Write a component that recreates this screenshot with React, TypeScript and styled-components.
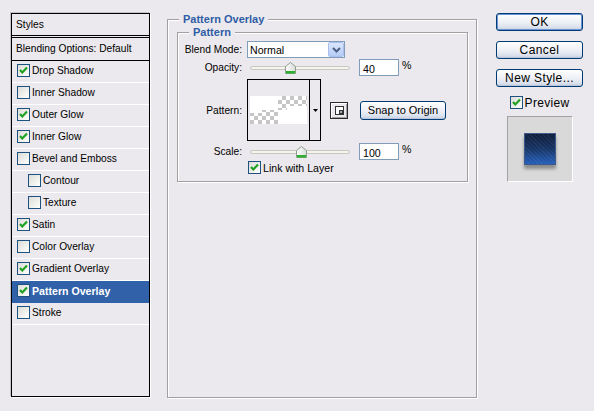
import styled, { createGlobalStyle } from "styled-components";

const GlobalStyle = createGlobalStyle`
  html, body {
    margin: 0;
    padding: 0;
    background: #ebe9ed;
  }
  body {
    font-family: "Liberation Sans", Arial, sans-serif;
    font-size: 10.2px;
    color: #000;
  }
`;

const Window = styled.div`
  width: 594px;
  height: 411px;
  box-sizing: border-box;
  display: flex;
  align-items: flex-start;
  padding: 13px 0 0 11px;
`;

/* ---------- left styles list ---------- */
const StylesPanel = styled.div`
  width: 139px;
  height: 384px;
  box-sizing: border-box;
  border: 1px solid #000;
  box-shadow: -1px -1px 0 #c4c2c8, 1px 1px 0 #fff;
  display: flex;
  flex-direction: column;
`;

const PanelHeader = styled.div`
  height: 21px;
  line-height: 21px;
  padding-left: 4px;
  border-bottom: 3px double #000;
`;

const BlendingRow = styled.div`
  height: 22px;
  line-height: 22px;
  padding-left: 4px;
  border-bottom: 1px solid #000;
`;

const StyleRow = styled.div<{ $indent?: boolean; $selected?: boolean }>`
  height: 21px;
  box-sizing: border-box;
  padding-bottom: 2px;
  display: flex;
  align-items: center;
  gap: 2px;
  padding-left: ${({ $indent }) => ($indent ? "16px" : "5px")};
  border-bottom: 1px solid ${({ $selected }) => ($selected ? "#3162a9" : "#fff")};
  background: ${({ $selected }) => ($selected ? "#3162a9" : "transparent")};
  color: ${({ $selected }) => ($selected ? "#fff" : "#000")};
  font-weight: ${({ $selected }) => ($selected ? "bold" : "normal")};
  font-size: ${({ $selected }) => ($selected ? "10.6px" : "inherit")};
  height: 22px;
`;

/* ---------- checkbox ---------- */
const Box = styled.span`
  width: 13px;
  height: 13px;
  box-sizing: border-box;
  flex: none;
  border: 1px solid #1c5180;
  background: linear-gradient(135deg, #dcdcd7 0%, #f4f4f2 70%, #fff 100%);
  display: flex;
  align-items: center;
  justify-content: center;
`;

const CheckBox = ({ checked }: { checked?: boolean }) => (
  <Box>
    {checked && (
      <svg width="11" height="11" viewBox="0 0 11 11">
        <polyline points="2,5 4.3,7.5 9,2.5" fill="none" stroke="#21a121" strokeWidth="2.2" />
      </svg>
    )}
  </Box>
);

/* ---------- group boxes ---------- */
const GroupBox = styled.fieldset`
  margin: 0 0 0 17px;
  padding: 0 9px 0 9px;
  width: 310px;
  height: 385px;
  box-sizing: border-box;
  min-width: 0;
  border: 1px solid #a0a0a0;
  box-shadow: inset 1px 1px 0 #fff, 1px 1px 0 #fff;
`;

const InnerGroup = styled.fieldset`
  margin: 0;
  padding: 0;
  width: 291px;
  height: 156px;
  box-sizing: border-box;
  min-width: 0;
  border: 1px solid #a0a0a0;
  box-shadow: inset 1px 1px 0 #fff, 1px 1px 0 #fff;
`;

const Legend = styled.legend<{ $offset: number }>`
  margin-left: ${({ $offset }) => $offset}px;
  padding: 0 4px;
  line-height: 13px;
  font-size: 11px;
  font-weight: bold;
  color: #2f5da6;
  background: #ebe9ed;
`;

const FormRow = styled.div<{ $h: number; $top?: number }>`
  display: grid;
  grid-template-columns: 64px auto;
  column-gap: 5px;
  align-items: center;
  height: ${({ $h }) => $h}px;
  margin-top: ${({ $top }) => $top ?? 0}px;
`;

const Label = styled.span`
  text-align: right;
`;

const Controls = styled.div`
  display: flex;
  align-items: center;
  height: 100%;
`;

/* ---------- select ---------- */
const Select = styled.div`
  width: 98px;
  height: 17px;
  box-sizing: border-box;
  border: 1px solid #7f9db9;
  background: #fff;
  display: flex;
  align-items: center;
  justify-content: space-between;
  padding-left: 2px;
  font-size: 10.6px;
`;

const SelectButton = styled.span`
  width: 16px;
  height: 15px;
  box-sizing: border-box;
  border: 1px solid #a9bfee;
  border-radius: 2px;
  background: linear-gradient(#dbe6fd, #b5cbf7);
  display: flex;
  align-items: center;
  justify-content: center;
`;

/* ---------- slider ---------- */
const Slider = styled.div`
  position: relative;
  width: 104px;
  height: 17px;
  margin-left: 3px;
  display: flex;
  align-items: center;
`;

const Track = styled.div`
  width: 100px;
  height: 4px;
  box-sizing: border-box;
  border: 1px solid #c9c7c0;
  border-radius: 2px;
  background: #f4f3ee;
`;

const Thumb = styled.svg`
  position: absolute;
  top: 3px;
`;

const SliderThumb = ({ pos }: { pos: number }) => (
  <Thumb width="11" height="12" viewBox="0 0 11 12" style={{ left: pos - 5 }}>
    <defs>
      <linearGradient id="tg" x1="0" y1="0" x2="1" y2="0">
        <stop offset="0" stopColor="#ffffff" />
        <stop offset="1" stopColor="#d8dcd6" />
      </linearGradient>
    </defs>
    <path d="M0.5,4.5 L5.5,0.5 L10.5,4.5 L10.5,11.5 L0.5,11.5 Z" fill="url(#tg)" stroke="#8d9c8d" />
    <rect x="1" y="9" width="9" height="2.5" fill="#2fb02f" />
  </Thumb>
);

const ValueInput = styled.div`
  width: 40px;
  height: 17px;
  box-sizing: border-box;
  margin-left: 5px;
  border: 1px solid #7f9db9;
  background: #fff;
  padding: 3px 0 0 3px;
  line-height: 12px;
  font-size: 10.6px;
`;

const Percent = styled.span`
  align-self: flex-start;
  margin-left: 3px;
  line-height: 12px;
  font-size: 10.6px;
`;

/* ---------- pattern picker ---------- */
const PatternBox = styled.div`
  width: 74px;
  height: 62px;
  box-sizing: border-box;
  border: 1px solid #000;
  display: flex;
`;

const Swatch = styled.div`
  flex: 1;
  display: flex;
  align-items: center;
  justify-content: center;
  border-right: 1px solid #000;
`;

const ArrowCell = styled.div`
  width: 10px;
  display: flex;
  align-items: center;
  justify-content: center;
`;

const IconButton = styled.div`
  width: 18px;
  height: 17px;
  box-sizing: border-box;
  margin-left: 9px;
  border: 1px solid #2a2a2a;
  box-shadow: inset 1px 1px 0 #fff, inset -1px -1px 0 #a0a0a0;
  display: flex;
  align-items: center;
  justify-content: center;
`;

const XPButton = styled.div<{ $w: number; $h: number; $default?: boolean }>`
  width: ${({ $w }) => $w}px;
  height: ${({ $h }) => $h}px;
  box-sizing: border-box;
  border: 1px solid #003c74;
  border-radius: 3px;
  font-size: 11px;
  background: linear-gradient(#ffffff 0%, #f0f2f7 45%, #dde3ee 80%, #c5cfe1 100%);
  box-shadow: ${({ $default }) => ($default ? "inset 0 0 0 1px #6b93d8" : "inset 0 -1px 0 #b9c5dc")};
  display: flex;
  align-items: center;
  justify-content: center;
`;

const SnapButton = styled(XPButton)`
  margin-left: 12px;
`;

const LinkRow = styled.div`
  display: flex;
  align-items: center;
  gap: 2px;
  height: 13px;
  margin: 1px 0 0 70px;
  font-size: 10.6px;
`;

/* ---------- right column ---------- */
const RightColumn = styled.div`
  margin-left: 19px;
  width: 87px;
  display: flex;
  flex-direction: column;
  align-items: center;
`;

const DialogButton = styled(XPButton)`
  font-size: 12px;
  letter-spacing: 0.4px;
  margin-bottom: 10px;
`;

const PreviewToggle = styled.div`
  display: flex;
  align-items: center;
  gap: 2px;
  height: 13px;
  margin-top: -1px;
  font-size: 12px;
  letter-spacing: 0.3px;
`;

const PreviewFrame = styled.div`
  width: 66px;
  height: 66px;
  box-sizing: border-box;
  margin-top: 7px;
  border: 1px solid;
  border-color: #a3a3a3 #fff #fff #a3a3a3;
  background: #d9d9d9;
  display: flex;
  align-items: center;
  justify-content: center;
`;

const PreviewSquare = styled.div`
  width: 32px;
  height: 32px;
  box-sizing: border-box;
  border: 1px solid #3a5a8a;
  background:
    repeating-linear-gradient(45deg, rgba(255, 255, 255, 0.05) 0 1px, transparent 1px 3px),
    linear-gradient(#0f1e3c 0%, #183566 50%, #2560bc 100%);
  box-shadow: 0 4px 3px rgba(0, 0, 0, 0.35);
`;

type StyleItem = { name: string; checked?: boolean; indent?: boolean; selected?: boolean };

const styleItems: StyleItem[] = [
  { name: "Drop Shadow", checked: true },
  { name: "Inner Shadow" },
  { name: "Outer Glow", checked: true },
  { name: "Inner Glow", checked: true },
  { name: "Bevel and Emboss" },
  { name: "Contour", indent: true },
  { name: "Texture", indent: true },
  { name: "Satin", checked: true },
  { name: "Color Overlay" },
  { name: "Gradient Overlay", checked: true },
  { name: "Pattern Overlay", checked: true, selected: true },
  { name: "Stroke" },
];

const CheckerArt = () => (
  <svg width="57" height="28" viewBox="0 0 57 28">
    <defs>
      <pattern id="chk" width="8" height="8" patternUnits="userSpaceOnUse">
        <rect width="8" height="8" fill="#fff" />
        <rect width="4" height="4" fill="#c6c6c6" />
        <rect x="4" y="4" width="4" height="4" fill="#c6c6c6" />
      </pattern>
    </defs>
    <rect width="57" height="28" fill="#fff" />
    <path d="M28,0 H57 V10 H37 V14 H28 Z" fill="url(#chk)" />
    <path d="M0,17 H12 V14 H28 V28 H0 Z" fill="url(#chk)" />
  </svg>
);

const App = () => {
  return (
    <>
      <GlobalStyle />
      <Window>
        <StylesPanel>
          <PanelHeader>Styles</PanelHeader>
          <BlendingRow>Blending Options: Default</BlendingRow>
          {styleItems.map((item) => (
            <StyleRow key={item.name} $indent={item.indent} $selected={item.selected}>
              <CheckBox checked={item.checked} />
              {item.name}
            </StyleRow>
          ))}
        </StylesPanel>

        <GroupBox>
          <Legend $offset={2}>Pattern Overlay</Legend>
          <InnerGroup>
            <Legend $offset={11}>Pattern</Legend>
            <FormRow $h={17} $top={2}>
              <Label>Blend Mode:</Label>
              <Controls>
                <Select>
                  Normal
                  <SelectButton>
                    <svg width="9" height="6" viewBox="0 0 9 6">
                      <polyline points="1,1 4.5,4.5 8,1" fill="none" stroke="#4d6185" strokeWidth="2" />
                    </svg>
                  </SelectButton>
                </Select>
              </Controls>
            </FormRow>
            <FormRow $h={17} $top={1}>
              <Label>Opacity:</Label>
              <Controls>
                <Slider>
                  <Track />
                  <SliderThumb pos={40} />
                </Slider>
                <ValueInput>40</ValueInput>
                <Percent>%</Percent>
              </Controls>
            </FormRow>
            <FormRow $h={62} $top={3}>
              <Label>Pattern:</Label>
              <Controls>
                <PatternBox>
                  <Swatch>
                    <CheckerArt />
                  </Swatch>
                  <ArrowCell>
                    <svg width="5" height="3" viewBox="0 0 5 3">
                      <path d="M0,0 H5 L2.5,3 Z" fill="#000" />
                    </svg>
                  </ArrowCell>
                </PatternBox>
                <IconButton>
                  <svg width="9" height="9" viewBox="0 0 9 9">
                    <rect x="0.5" y="0.5" width="8" height="8" fill="#fff" stroke="#333" />
                    <path d="M4,4 H8 V8 H4 Z" fill="#333" />
                    <path d="M5,5 H7 V7 H5 Z" fill="#9ab" />
                  </svg>
                </IconButton>
                <SnapButton $w={86} $h={19}>Snap to Origin</SnapButton>
              </Controls>
            </FormRow>
            <FormRow $h={17} $top={2}>
              <Label>Scale:</Label>
              <Controls>
                <Slider>
                  <Track />
                  <SliderThumb pos={51} />
                </Slider>
                <ValueInput>100</ValueInput>
                <Percent>%</Percent>
              </Controls>
            </FormRow>
            <LinkRow>
              <CheckBox checked />
              Link with Layer
            </LinkRow>
          </InnerGroup>
        </GroupBox>

        <RightColumn>
          <DialogButton $w={87} $h={18} $default>OK</DialogButton>
          <DialogButton $w={87} $h={18}>Cancel</DialogButton>
          <DialogButton $w={87} $h={18}>New Style...</DialogButton>
          <PreviewToggle>
            <CheckBox checked />
            Preview
          </PreviewToggle>
          <PreviewFrame>
            <PreviewSquare />
          </PreviewFrame>
        </RightColumn>
      </Window>
    </>
  );
};

export default App;
